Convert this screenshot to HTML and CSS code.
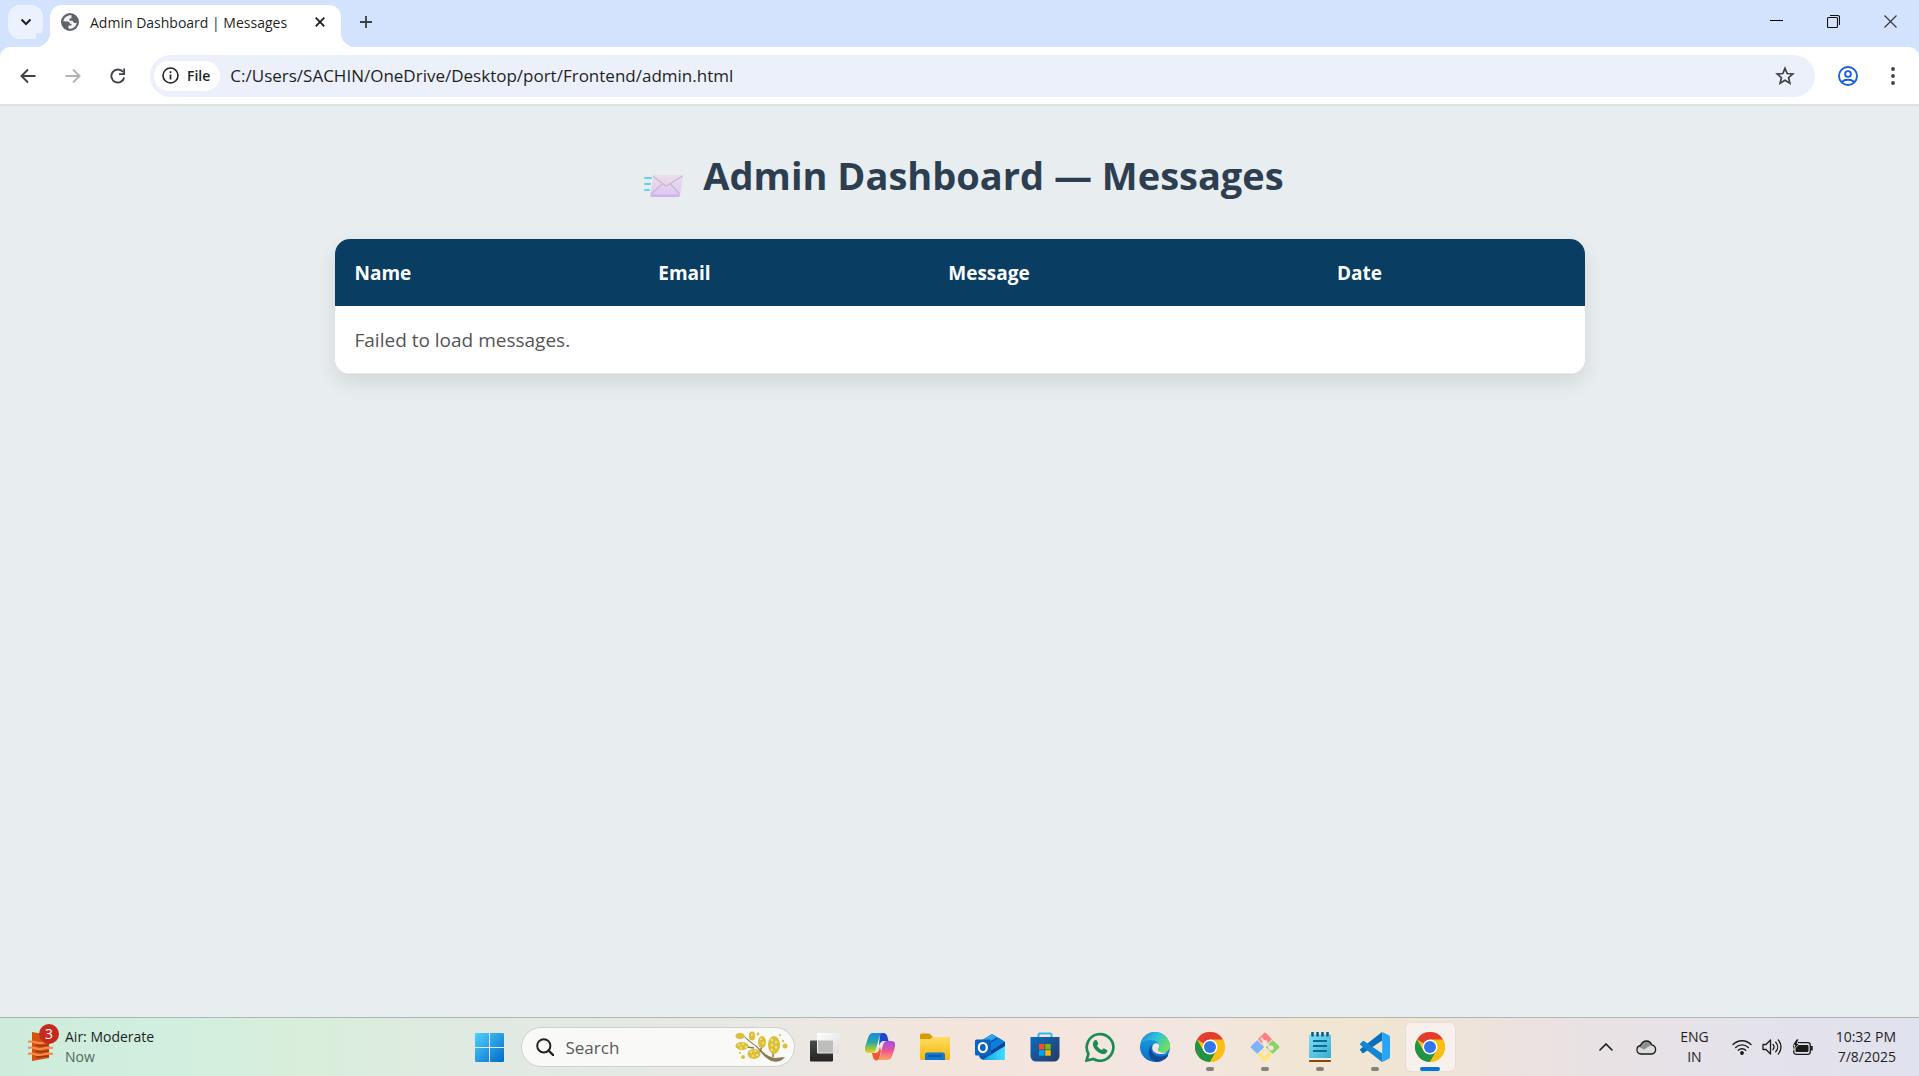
FILE: index.html
```html
<!DOCTYPE html>
<html lang="en">
<head>
<meta charset="utf-8">
<title>Admin Dashboard | Messages</title>
<link rel="stylesheet" href="styles.css">
</head>
<body>
<svg class="defs" aria-hidden="true">
  <defs>
    <linearGradient id="win" x1="0" y1="0" x2="1" y2="1"><stop offset="0" stop-color="#4fd2fb"/><stop offset="1" stop-color="#0069cd"/></linearGradient>
    <linearGradient id="dark" x1="0" y1="0" x2="0" y2="1"><stop offset="0" stop-color="#4a4a48"/><stop offset="1" stop-color="#232321"/></linearGradient>
    <linearGradient id="lite" x1="0" y1="0" x2="1" y2="1"><stop offset="0" stop-color="#fff"/><stop offset="1" stop-color="#dedede"/></linearGradient>
    <linearGradient id="cpA" x1="0" y1="0" x2="0" y2="1"><stop offset="0" stop-color="#1c8be6"/><stop offset=".45" stop-color="#25a7a0"/><stop offset="1" stop-color="#e9d60f"/></linearGradient>
    <linearGradient id="cpB" x1="0" y1="0" x2="0" y2="1"><stop offset="0" stop-color="#a04cf0"/><stop offset=".5" stop-color="#ec5497"/><stop offset="1" stop-color="#ffa55c"/></linearGradient>
    <linearGradient id="fold" x1="0" y1="0" x2="0" y2="1"><stop offset="0" stop-color="#ffdc62"/><stop offset="1" stop-color="#f5b70e"/></linearGradient>
    <linearGradient id="cyan" x1="0" y1="0" x2="1" y2="0"><stop offset="0" stop-color="#1d9fe0"/><stop offset="1" stop-color="#3fe0ff"/></linearGradient>
    <linearGradient id="store" x1="0" y1="0" x2="1" y2="1"><stop offset="0" stop-color="#0c6cc0"/><stop offset="1" stop-color="#273a63"/></linearGradient>
    <linearGradient id="edgeA" x1="0" y1="0" x2="1" y2=".6"><stop offset="0" stop-color="#1683d2"/><stop offset=".5" stop-color="#2fc0dc"/><stop offset="1" stop-color="#6fe05c"/></linearGradient>
    <linearGradient id="edgeB" x1="0" y1="0" x2="0" y2="1"><stop offset="0" stop-color="#1da3e2"/><stop offset="1" stop-color="#0a6ccb"/></linearGradient>
    <linearGradient id="note" x1="0" y1="0" x2="1" y2="1"><stop offset="0" stop-color="#7fe0f6"/><stop offset="1" stop-color="#38acd0"/></linearGradient>
    <linearGradient id="mail" x1="0" y1="0" x2="0" y2="1"><stop offset="0" stop-color="#ebdfe8"/><stop offset="1" stop-color="#dcc6f2"/></linearGradient>
    <symbol id="chrome" viewBox="0 0 30 30">
      <circle cx="15" cy="15" r="15" fill="#fbbf14"/>
      <path d="M15 15 2 7.500A15 15 0 0 1 28 7.500Z" fill="#e33b2e"/>
      <path d="M2 7.500A15 15 0 0 0 15 30L21.500 18.750 15 15 8.500 18.750Z" fill="#229342"/>
      <path d="M15 30A15 15 0 0 0 28 7.500H15L21.500 18.750Z" fill="#fbbf14"/>
      <circle cx="15" cy="15" r="7.500" fill="#fff"/><circle cx="15" cy="15" r="6" fill="#2f76ea"/>
    </symbol>
  </defs>
</svg>

<header class="browser">
  <div class="tabstrip">
    <button class="tab-search" aria-label="Search tabs"><svg width="12" height="12" viewBox="0 0 12 12"><path d="M1.500 3.500 6 8l4.500-4.500" fill="none" stroke="#1f1f1f" stroke-width="2"/></svg></button>
    <div class="tab">
      <svg width="18" height="18" viewBox="0 0 18 18"><circle cx="9" cy="9" r="9" fill="#5f6368"/><path d="M10.500 2.200C6 2 3 4.500 2.300 8.300l4.200.2c1.500 0 2.300.8 2.300 2.300h1.700v1.700H7.800c-.8 1.200-.6 2.500.4 3.300 4 .3 7.300-2.600 7.500-6.300-1 .8-2.200.8-3 0-.7-.8-.7-1.700-1.700-1.800H8.500V5.500c1.500.2 2-.4 2-1.200Z" fill="#f1f3f4"/></svg>
      <span class="tab-title">Admin Dashboard | Messages</span>
      <button class="tab-close" aria-label="Close tab"><svg width="10" height="10" viewBox="0 0 10 10"><path d="M.7.7l8.600 8.600M9.300.7.7 9.300" stroke="#1f1f1f" stroke-width="1.800"/></svg></button>
    </div>
    <button class="new-tab" aria-label="New tab"><svg width="14" height="14" viewBox="0 0 14 14"><path d="M7 1v12M1 7h12" stroke="#3c4043" stroke-width="1.800"/></svg></button>
    <div class="window-controls">
      <button aria-label="Minimize"><svg width="13" height="13" viewBox="0 0 13 13"><path d="M0 5.500h13" stroke="#000"/></svg></button>
      <button aria-label="Restore"><svg width="13" height="13" viewBox="0 0 13 13"><path d="M.5 3.500a1 1 0 0 1 1-1h8a1 1 0 0 1 1 1v8a1 1 0 0 1-1 1h-8a1 1 0 0 1-1-1ZM3 .5h7.500a2 2 0 0 1 2 2V10" fill="none" stroke="#111" stroke-width="1.100"/></svg></button>
      <button aria-label="Close"><svg width="13" height="13" viewBox="0 0 13 13"><path d="M.5.5l12 12M12.500.5l-12 12" stroke="#333" stroke-width="1.100"/></svg></button>
    </div>
  </div>
  <div class="toolbar">
    <button class="tool" aria-label="Back"><svg width="16" height="16" viewBox="0 0 16 16"><path d="M15.500 8H2M8 1.500 1.500 8 8 14.500" fill="none" stroke="#3f4246" stroke-width="1.900"/></svg></button>
    <button class="tool" aria-label="Forward" disabled><svg width="16" height="16" viewBox="0 0 16 16"><path d="M.5 8H14M8 1.500 14.500 8 8 14.500" fill="none" stroke="#b0b2b5" stroke-width="1.900"/></svg></button>
    <button class="tool" aria-label="Reload"><svg width="16" height="16" viewBox="0 0 16 16"><path d="M14.200 9.500A6.500 6.500 0 1 1 13 4" fill="none" stroke="#3f4246" stroke-width="1.900"/><path d="M15 .5V7H9V5.200h4.200V.5Z" fill="#3f4246"/></svg></button>
    <div class="omnibox">
      <button class="chip"><svg width="17" height="17" viewBox="0 0 17 17"><circle cx="8.500" cy="8.500" r="7.500" fill="none" stroke="#222" stroke-width="1.600"/><path d="M8.500 7.500v5M8.500 4.200V6" stroke="#222" stroke-width="1.700"/></svg>File</button>
      <input class="url" type="text" aria-label="Address" value="C:/Users/SACHIN/OneDrive/Desktop/port/Frontend/admin.html">
      <button class="star" aria-label="Bookmark"><svg width="20" height="20" viewBox="0 0 20 20"><path d="m10 2.300 2.200 5.200 5.600.5-4.200 3.700 1.300 5.500L10 14.300l-4.900 2.900 1.300-5.500L2.200 8l5.600-.5Z" fill="none" stroke="#3f4246" stroke-width="1.700"/></svg></button>
    </div>
    <button class="tool" aria-label="Profile"><svg width="20" height="20" viewBox="0 0 20 20" fill="none" stroke="#1a5fdc" stroke-width="1.900"><circle cx="10" cy="10" r="9"/><circle cx="10" cy="8" r="2.900"/><path d="M3.800 16c1.800-1.800 4-2.200 6.200-2.200s4.400.4 6.200 2.200"/></svg></button>
    <button class="tool" aria-label="Menu"><svg width="4" height="18" viewBox="0 0 4 18" fill="#3f4246"><circle cx="2" cy="2" r="1.900"/><circle cx="2" cy="9" r="1.900"/><circle cx="2" cy="16" r="1.900"/></svg></button>
  </div>
</header>

<main class="page">
  <h1 class="heading">
    <svg width="50" height="36" viewBox="0 0 50 36" aria-hidden="true"><path d="M10 12h6M10 18h5M10 24h4" stroke="#5fd0f5" stroke-width="2" stroke-linecap="round"/><path d="M18.500 9h28a1.500 1.500 0 0 1 1.500 1.700l-3 18.500a2 2 0 0 1-2 1.800h-26a1.500 1.500 0 0 1-1.500-1.700l2.500-18.500a2 2 0 0 1 .5-1.800Z" fill="url(#mail)"/><path d="M15.500 28.500h29.600l-.4 1.500a1.500 1.500 0 0 1-1.500 1H17a1.500 1.500 0 0 1-1.500-1.500Z" fill="#d3b1ec"/><path d="m18 10 13 10.300L47.500 10M16 28l11.500-10M44.500 28l-9-10" fill="none" stroke="#ccb6d8" stroke-width="1.200"/></svg>
    <span>Admin Dashboard — Messages</span>
  </h1>
  <div class="card">
    <table class="messages">
      <colgroup><col class="col-name"><col class="col-email"><col class="col-message"><col class="col-date"></colgroup>
      <thead><tr><th scope="col">Name</th><th scope="col">Email</th><th scope="col">Message</th><th scope="col">Date</th></tr></thead>
      <tbody><tr><td colspan="4">Failed to load messages.</td></tr></tbody>
    </table>
  </div>
</main>

<footer class="taskbar">
  <button class="weather">
    <span class="weather-icon">
      <svg width="26" height="32" viewBox="0 0 26 32"><path d="M4 1l17 3v23L4 30Z" fill="#d4520d"/><path d="M0 11c5-2 9 2 13 1s7-2 12-1M0 17c5-2 9 2 13 1s7-2 12-1M0 23c5-2 9 2 13 1s7-2 12-1" fill="none" stroke="#f58b4c" stroke-width="2.200"/><path d="M8 14c5 2 8 0 13 0M8 20c5 2 8 0 13 0M8 26c5 0 8-1 13-1" fill="none" stroke="#9c3507" stroke-width="1.500"/></svg>
      <span class="badge">3</span>
    </span>
    <span class="weather-text"><span>Air: Moderate</span><span class="muted">Now</span></span>
  </button>

  <nav class="apps" aria-label="Taskbar">
    <button class="app" aria-label="Start"><svg width="29" height="29" viewBox="0 0 29 29"><path d="M1 0h13v14H0V1a1 1 0 0 1 1-1ZM15 0h13a1 1 0 0 1 1 1v13H15ZM0 15h14v14H1a1 1 0 0 1-1-1ZM15 15h14v13a1 1 0 0 1-1 1H15Z" fill="url(#win)"/></svg></button>
    <label class="search">
      <svg width="18" height="18" viewBox="0 0 18 18"><circle cx="7.800" cy="7.800" r="6.600" fill="none" stroke="#222" stroke-width="2"/><path d="m12.500 12.500 4.700 4.700" stroke="#222" stroke-width="2.300" stroke-linecap="round"/></svg>
      <input type="text" aria-label="Search" placeholder="Search">
      <svg width="54" height="32" viewBox="0 0 54 32">
        <path d="M8 4c5 5 12 9 18 15 4 4 8 7 14 8l10-1c-5 6-12 6-17 2-7-5-9-10-14-14C15 11 11 9 8 4Z" fill="#8a7950"/><path d="M27 15l-2 6M38 20v6M20 24l4-3M12 16l7 1" stroke="#8a7950" stroke-width="1.500"/>
        <g fill="#d9bf3a"><ellipse cx="5" cy="5" rx="4.500" ry="3"/><ellipse cx="17" cy="5" rx="3.200" ry="4.500"/><ellipse cx="7" cy="15" rx="6.500" ry="4"/><ellipse cx="27" cy="11" rx="4" ry="6"/><ellipse cx="39" cy="14" rx="6" ry="9"/><ellipse cx="19" cy="23" rx="6.500" ry="5"/><circle cx="8" cy="26" r="2"/><circle cx="5" cy="22" r="1"/><circle cx="50" cy="15" r="2.500"/><circle cx="48" cy="10" r="1.200"/><circle cx="23" cy="3" r="1.400"/><circle cx="45" cy="4" r="1"/></g>
        <g fill="#f0dd70"><circle cx="4" cy="14" r="1.300"/><circle cx="8" cy="13" r="1.300"/><circle cx="11" cy="16" r="1.300"/><circle cx="6" cy="17" r="1.200"/><circle cx="37" cy="9" r="1.500"/><circle cx="41" cy="11" r="1.500"/><circle cx="37" cy="14" r="1.500"/><circle cx="41" cy="16" r="1.500"/><circle cx="37" cy="19" r="1.500"/><circle cx="26" cy="8" r="1.300"/><circle cx="28" cy="12" r="1.300"/><circle cx="16" cy="21" r="1.300"/><circle cx="20" cy="20" r="1.300"/><circle cx="18" cy="25" r="1.300"/><circle cx="22" cy="24" r="1.300"/><circle cx="17" cy="4" r="1.200"/></g>
      </svg>
    </label>
    <button class="app" aria-label="Task view"><svg width="30" height="30" viewBox="0 0 30 30"><path d="M0 9.500a1 1 0 0 1 1-1h22v20a1 1 0 0 1-1 1H1a1 1 0 0 1-1-1Z" fill="url(#dark)"/><rect x="7" y="1" width="22.500" height="20.500" rx="1" fill="url(#lite)"/><path d="M8 8.500h15v12H8Z" fill="#bdbdbb"/></svg></button>
    <button class="app" aria-label="Copilot"><svg width="30" height="28" viewBox="0 0 30 28"><path d="M15 0h3c3 0 4 2 4.500 4l1 4H19c-3 0-4 2-5 5Z" fill="#1b47cc"/><path d="M8 0h10c-2 0-3 2-4 5l-3 11c-1 3-2 4-5 4H4c-3 0-5-2-4-6L3 5c1-3 2-5 5-5Z" fill="url(#cpA)"/><path d="M7 20h4c3-1 3-3 4-6l1 4-2 8c-1 1-2 1.500-3 1.500C9 27 8 25 7 20Z" fill="#ee5a2b"/><path d="M22 8h4c3 0 5 2 4 6l-3 9c-1 3-2 4-5 4H11c2 0 3-1 4-4l3-11c1-3 2-4 4-4Z" fill="url(#cpB)"/></svg></button>
    <button class="app" aria-label="File Explorer"><svg width="30" height="28" viewBox="0 0 30 28"><path d="M0 2a1.500 1.500 0 0 1 1.500-1.500h8L13 4h16a1 1 0 0 1 1 1v5H0Z" fill="#d99a06"/><path d="M0 6h10l3-2h16a1 1 0 0 1 1 1v20.500a1.500 1.500 0 0 1-1.500 1.500h-27A1.500 1.500 0 0 1 0 25.500Z" fill="url(#fold)"/><path d="M5 27v-5a2.500 2.500 0 0 1 2.500-2.500h15A2.500 2.500 0 0 1 25 22v5Z" fill="#0f78cf"/><path d="M8.500 23h13" stroke="#0a4f9b" stroke-width="1.400"/></svg></button>
    <button class="app" aria-label="Outlook"><svg width="30" height="28" viewBox="0 0 30 28"><path d="M4 9 17 1l13 8v15a3 3 0 0 1-3 3H9a5 5 0 0 1-5-5Z" fill="#0b57ae"/><path d="M6 8 17 1l5 3-14 9Z" fill="#28a8ea"/><path d="M12 12 24 5l6 4-15 11Z" fill="#0b7fd8"/><path d="M14 19 30 9v5L16 24Z" fill="#07419a"/><path d="m30 13-18 11-4 3h19a3 3 0 0 0 3-3Z" fill="url(#cyan)"/><rect y="6.500" width="16" height="16" rx="1.500" fill="#0c65bd"/><ellipse cx="7.800" cy="14.500" rx="4" ry="4.500" fill="none" stroke="#fff" stroke-width="2.200"/></svg></button>
    <button class="app" aria-label="Microsoft Store"><svg width="30" height="30" viewBox="0 0 30 30"><path d="M8.500 6V3a1.500 1.500 0 0 1 1.500-1.500h10A1.500 1.500 0 0 1 21.500 3v3" fill="none" stroke="#32b7f0" stroke-width="2"/><path d="M.5 5h29v19a5.500 5.500 0 0 1-5.500 5.500H6A5.500 5.500 0 0 1 .5 24Z" fill="url(#store)"/><path d="M9 12h5.500v5.500H9Z" fill="#f25022"/><path d="M15.200 12h5.500v5.500h-5.500Z" fill="#7fba00"/><path d="M9 18.200h5.500v5.500H9Z" fill="#00a4ef"/><path d="M15.200 18.200h5.500v5.500h-5.500Z" fill="#ffb900"/></svg></button>
    <button class="app" aria-label="WhatsApp"><svg width="30" height="30" viewBox="0 0 30 30"><path d="M1.500 28.500l1.900-6.700A13.300 13.300 0 1 1 8.600 27Z" fill="none" stroke="#1c8a57" stroke-width="2.700"/><path d="M10.300 8c.9-.3 1.500 0 1.800.8l1 2.400c.3.900-.1 1.300-1.100 2.400 1.100 2.100 2.700 3.500 4.900 4.500 1-1.300 1.400-1.800 2.200-1.500l2.800 1.400c.6.400.5 1 .2 1.800-1.400 3.200-5.100 2.500-8 .9-2.500-1.500-4.600-3.700-5.800-6.200C7.500 12 8 9 10.300 8Z" fill="#1c8a57"/></svg></button>
    <button class="app" aria-label="Edge"><svg width="30" height="30" viewBox="0 0 30 30"><circle cx="15" cy="15" r="15" fill="url(#edgeB)"/><path d="M.3 12A15 15 0 0 1 30 14c0 4-3 6.500-7 6.500-3.500 0-5-1-5-2.500 0-1 1.200-1.500 1.200-4C19 11 16 8 11 8 6 8 2 10 .3 12Z" fill="url(#edgeA)"/><path d="M12 13c-5 4-4.500 14 4 17 5 0 9-2 12-6 .5-1-.3-1.500-1-1-6 3-14 1.500-15.500-4.500-.3-2 .2-4 .5-5.500Z" fill="#134a97"/><path d="M28.500 23.500l1.500-4v8l-3 2Z" fill="#f3e6e2"/><path d="M13 13c2-2.500 5.500-2 6.200.5.100 2-1.200 3.200-1.200 4.500 0 1.500 2 2.500 5 2.500h4c-5 3-13 1.500-14.500-3-.4-1.500-.2-3 .5-4.500Z" fill="#f3e6e2"/></svg></button>
    <button class="app running" aria-label="Chrome"><svg width="30" height="30"><use href="#chrome"/></svg></button>
    <button class="app running" aria-label="Git"><svg width="30" height="30" viewBox="0 0 30 30"><g transform="rotate(45 15 15)"><rect x="4.500" y="4.500" width="10" height="10" rx="1" fill="#ff8080"/><rect x="15.500" y="4.500" width="10" height="10" rx="1" fill="#88d26a"/><rect x="4.500" y="15.500" width="10" height="10" rx="1" fill="#80b3ff"/><rect x="15.500" y="15.500" width="10" height="10" rx="1" fill="#ffe680"/></g><path d="M11 6l4 4.500V22M15 10.500l5.500 5.500" stroke="#f3e7d9" stroke-width="2" fill="none"/><g fill="#f3e7d9"><circle cx="15" cy="10.500" r="2.600"/><circle cx="21" cy="16" r="2.600"/><circle cx="15" cy="21" r="2.600"/></g></svg></button>
    <button class="app running" aria-label="Notepad"><svg width="24" height="30" viewBox="0 0 24 30"><path d="M1 24h22v5a1 1 0 0 1-1 1H2a1 1 0 0 1-1-1Z" fill="#8c4310"/><path d="M1 24h22v4H1Z" fill="#f2f2f2"/><path d="M1 4a1.500 1.500 0 0 1 1.500-1.500h19A1.500 1.500 0 0 1 23 4v22H1Z" fill="url(#note)"/><path d="M5 9h14M5 14h14M5 19h14" stroke="#0b6b96" stroke-width="2"/><path d="M4.500.5v3M9.500.5v3M14.500.5v3M19.500.5v3" stroke="#0b5f87" stroke-width="2.600" stroke-linecap="round"/></svg></button>
    <button class="app running" aria-label="Visual Studio Code"><svg width="30" height="30" viewBox="0 0 30 30"><path d="M1.500 19.500.4 18.500a1 1 0 0 1 0-1.500L21 .7a1.800 1.800 0 0 1 1.200-.5V8.500L4 20.800a1.500 1.500 0 0 1-2.500-1.300Z" fill="#0a6fbd"/><path d="M.4 11.500 2.500 9.200a1.500 1.500 0 0 1 1.800 0L22.200 21.500v8.400a2 2 0 0 1-1.300-.6L.4 13a1 1 0 0 1 0-1.500Z" fill="#1286d2"/><path d="M22.200 0 28.500 3A2.500 2.500 0 0 1 30 5v20a2.500 2.500 0 0 1-1.500 2l-6.300 3Z" fill="#2aa5f5"/></svg></button>
    <button class="app running active" aria-label="Chrome, active window"><svg width="30" height="30"><use href="#chrome"/></svg></button>
  </nav>

  <div class="tray">
    <button aria-label="Show hidden icons"><svg width="14" height="8" viewBox="0 0 14 8"><path d="M1 7l6-6 6 6" fill="none" stroke="#1b1b1b" stroke-width="1.600" stroke-linecap="round"/></svg></button>
    <button aria-label="OneDrive"><svg width="21" height="15" viewBox="0 0 21 15"><path d="M5 14a4.300 4.300 0 0 1-.6-8.500Q6.500 1 10.500 1q3.500 0 5.200 3.800A4.700 4.700 0 0 1 16 14Z" fill="#dcdcdc"/><path d="M4.400 5.500Q6.500 1 10.500 1q3.500 0 5.200 3.800L8 9.500 2 6.500Z" fill="#8f8f8f"/><path d="M5 14a4.300 4.300 0 0 1-.6-8.500Q6.500 1 10.500 1q3.500 0 5.200 3.800A4.700 4.700 0 0 1 16 14Z" fill="none" stroke="#1b1b1b" stroke-width="1.300"/></svg></button>
    <button class="lines language"><span>ENG</span><span>IN</span></button>
    <button class="status" aria-label="Network, volume and battery">
      <svg width="20" height="16" viewBox="0 0 20 16" fill="none" stroke="#1b1b1b" stroke-width="1.400" stroke-linecap="round"><path d="M1 5.500a12.700 12.700 0 0 1 18 0M3.700 8.500a8.900 8.900 0 0 1 12.600 0M6.300 11.300a5.200 5.200 0 0 1 7.400 0"/><circle cx="10" cy="14" r="1.200" fill="#1b1b1b"/></svg>
      <svg width="20" height="18" viewBox="0 0 20 18" fill="none" stroke="#1b1b1b" stroke-width="1.300" stroke-linecap="round" stroke-linejoin="round"><path d="M1 6.500h3L8.500 2v14L4 11.500H1ZM11 6.500c1.300 1.500 1.300 3.500 0 5M13.700 4.200c2.600 2.800 2.600 6.800 0 9.600M16.300 2c3.600 4 3.600 10 0 14"/></svg>
      <svg width="21" height="17" viewBox="0 0 21 17"><rect x="1.700" y="3.700" width="16.600" height="11.600" rx="2.500" fill="none" stroke="#1b1b1b" stroke-width="1.300"/><path d="M4 6.500h12v6H4Z" fill="#1b1b1b" stroke="#1b1b1b"/><path d="M19 7h1.700v4.500H19Z" fill="#1b1b1b"/><path d="M4.500 0 .5 6h2.500L1 11.500 7.500 4.500H5L7 0Z" fill="#1b1b1b" stroke="#e5e2ea" stroke-width=".8"/></svg>
    </button>
    <button class="lines clock"><span>10:32 PM</span><span>7/8/2025</span></button>
  </div>
</footer>
</body>
</html>
```
FILE: styles.css
```css
* { box-sizing: border-box; }

body {
  margin: 0;
  min-height: 100vh;
  display: flex;
  flex-direction: column;
  font-family: "Open Sans", "Noto Sans", sans-serif;
  color: #1f1f1f;
  background: #e8edf0;
}

button {
  margin: 0;
  padding: 0;
  border: 0;
  background: none;
  font: inherit;
  color: inherit;
  display: flex;
  align-items: center;
  justify-content: center;
}

input {
  min-width: 0;
  padding: 0;
  border: 0;
  outline: 0;
  background: none;
  font: inherit;
  color: inherit;
}

svg { display: block; flex: none; }

.defs { position: absolute; width: 0; height: 0; }

/* Browser window */
.browser {
  background: #d3e2fd;
  border-bottom: 2px solid #dde3e1;
}

.tabstrip {
  display: flex;
  height: 47px;
  padding: 5px 0 0 8px;
}

.tab-search {
  width: 35px;
  height: 34px;
  border-radius: 12px;
  background: #ebf1fe;
}

.tab {
  position: relative;
  display: flex;
  align-items: center;
  width: 291px;
  height: 42px;
  margin-left: 7px;
  padding: 0 16px 8px 11px;
  border-radius: 12px 12px 0 0;
  background: #fff;
  font-size: 14px;
}

.tab::before,
.tab::after {
  content: "";
  position: absolute;
  bottom: 0;
  width: 14px;
  height: 14px;
}

.tab::before {
  right: 100%;
  background: radial-gradient(circle at 0 0, #d3e2fd 14px, #fff 14px);
}

.tab::after {
  left: 100%;
  background: radial-gradient(circle at 100% 0, #d3e2fd 14px, #fff 14px);
}

.tab-title {
  flex: 1;
  margin-left: 11px;
  white-space: nowrap;
}

.new-tab {
  width: 50px;
  height: 34px;
}

.window-controls {
  display: flex;
  height: 32px;
  margin-left: auto;
}

.window-controls button { width: 57px; }

.toolbar {
  display: flex;
  align-items: center;
  height: 57px;
  padding: 0 4px 0 5px;
  border-radius: 10px 10px 0 0;
  background: #fff;
}

.tool {
  width: 45px;
  height: 42px;
}

.omnibox {
  flex: 1;
  display: flex;
  align-items: center;
  height: 42px;
  margin: 0 10px;
  padding: 0 20px 0 4px;
  border-radius: 21px;
  background: #ebf0fa;
}

.chip {
  gap: 8px;
  height: 30px;
  padding: 0 10px 0 8px;
  border-radius: 15px;
  background: #fff;
  font-size: 14px;
  font-weight: 600;
}

.url {
  flex: 1;
  margin-left: 10px;
  font-size: 17px;
}

/* Page */
.page {
  flex: 1;
  display: flex;
  flex-direction: column;
  align-items: center;
  padding: 42px 20px;
}

.heading {
  display: flex;
  align-items: center;
  gap: 18px;
  margin: 0 0 37px;
  font-size: 38px;
  line-height: 54px;
  font-weight: 700;
  color: #2c3e50;
}

.heading svg { align-self: flex-end; }

.card {
  width: 100%;
  max-width: 1250px;
  overflow: hidden;
  border-radius: 15px;
  background: #fff;
  box-shadow: 0 8px 20px rgba(0, 0, 0, 0.1);
}

.messages {
  width: 100%;
  table-layout: fixed;
  border-collapse: collapse;
  font-size: 19px;
  line-height: 27px;
  text-align: left;
}

.col-name { width: 24.3%; }
.col-email { width: 23.2%; }
.col-message { width: 31.1%; }
.col-date { width: 21.4%; }

.messages th,
.messages td { padding: 21px 20px 19px; }

.messages th {
  background: #0a3d62;
  color: #fff;
  font-weight: 700;
}

.messages td {
  border-bottom: 1px solid #e6e8ea;
  color: #555;
}

/* Taskbar */
.taskbar {
  display: grid;
  grid-template-columns: 1fr auto 1fr;
  align-items: center;
  height: 59px;
  border-top: 1px solid #abb5b2;
  background: linear-gradient(90deg, #cdecdc 0%, #d0efdf 8%, #d9eedb 16%, #e0eae2 25%, #e9e8e5 40%, #f3e5dc 50%, #f4e5df 57%, #f2e6e1 62%, #f1e6d3 68%, #f0e5d4 74%, #ebe2e1 80%, #e5e2e9 89%, #e1e2ef 100%);
}

.weather {
  justify-self: start;
  gap: 11px;
  margin-left: 28px;
  font-size: 14px;
  line-height: 20px;
}

.weather-icon { position: relative; }

.badge {
  position: absolute;
  top: -7px;
  left: 11px;
  width: 20px;
  height: 20px;
  border-radius: 10px;
  background: #c42b1c;
  color: #fff;
}

.weather-text {
  display: flex;
  flex-direction: column;
  text-align: left;
}

.muted { color: #55655e; }

.apps {
  display: flex;
  align-items: center;
}

.app {
  position: relative;
  width: 49px;
  height: 48px;
  margin: 0 3px;
  border-radius: 5px;
}

.app.active {
  background: #f8f0ed;
  box-shadow: 0 0 0 1px #e8dcd8;
}

.running::after {
  content: "";
  position: absolute;
  bottom: 0;
  left: 50%;
  width: 8px;
  height: 4px;
  margin-left: -4px;
  border-radius: 2px;
  background: #86817a;
}

.active::after {
  width: 20px;
  margin-left: -10px;
  background: #0078d4;
}

.search {
  display: flex;
  align-items: center;
  width: 274px;
  height: 40px;
  margin: 0 3px 0 4px;
  padding: 0 5px 0 14px;
  border: 1px solid #cfd1ce;
  border-radius: 20px;
  background: #f9f9f8;
  font-size: 17px;
}

.search input {
  flex: 1;
  margin-left: 12px;
}

.search input::placeholder {
  color: #5a5a5a;
  opacity: 1;
}

.tray {
  display: flex;
  align-items: center;
  justify-self: end;
  margin-right: 23px;
  font-size: 14px;
  line-height: 20px;
}

.tray button { margin-left: 23px; }

.tray .lines { flex-direction: column; }

.tray .clock { align-items: flex-end; }

.tray .status { gap: 10px; }
```
